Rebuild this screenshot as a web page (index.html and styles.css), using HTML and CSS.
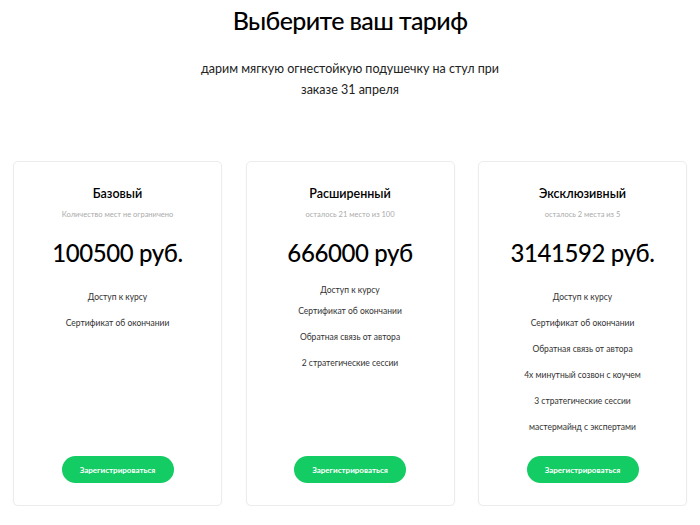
FILE: index.html
```html
<!DOCTYPE html>
<html lang="ru">
<head>
<meta charset="utf-8">
<title>Тарифы</title>
<link rel="stylesheet" href="styles.css">
</head>
<body>
<main class="page">
  <h1 class="title">Выберите ваш тариф</h1>
  <p class="lead">дарим мягкую огнестойкую подушечку на стул при<br>заказе 31 апреля</p>
  <section class="plans">
    <article class="card">
      <h2 class="card-name">Базовый</h2>
      <p class="card-note">Количество мест не ограничено</p>
      <p class="card-price">100500 руб.</p>
      <ul class="features">
        <li>Доступ к курсу</li>
        <li>Сертификат об окончании</li>
      </ul>
      <a class="btn" href="#">Зарегистрироваться</a>
    </article>
    <article class="card">
      <h2 class="card-name">Расширенный</h2>
      <p class="card-note">осталось 21 место из 100</p>
      <p class="card-price">666000 руб</p>
      <ul class="features features-mid">
        <li>Доступ к курсу</li>
        <li>Сертификат об окончании</li>
        <li>Обратная связь от автора</li>
        <li>2 стратегические сессии</li>
      </ul>
      <a class="btn" href="#">Зарегистрироваться</a>
    </article>
    <article class="card">
      <h2 class="card-name">Эксклюзивный</h2>
      <p class="card-note">осталось 2 места из 5</p>
      <p class="card-price">3141592 руб.</p>
      <ul class="features">
        <li>Доступ к курсу</li>
        <li>Сертификат об окончании</li>
        <li>Обратная связь от автора</li>
        <li>4х минутный созвон с коучем</li>
        <li>3 стратегические сессии</li>
        <li>мастермайнд с экспертами</li>
      </ul>
      <a class="btn" href="#">Зарегистрироваться</a>
    </article>
  </section>
</main>
</body>
</html>
```
FILE: styles.css
```css
* { box-sizing: border-box; }
html, body { margin: 0; padding: 0; background: #fff; }
body {
  font-family: "Lato", "Noto Sans", "DejaVu Sans", sans-serif;
  color: #000;
}
.page {
  width: 674px;
  margin: 0 auto;
  display: flex;
  flex-direction: column;
  align-items: center;
}
.title {
  margin: 3px 0 0;
  font-size: 25px;
  line-height: 34px;
  font-weight: 500;
  letter-spacing: -0.6px;
}
.lead {
  margin: 21px 0 0;
  font-size: 12.5px;
  line-height: 21px;
  text-align: center;
  color: #222;
  font-weight: 400;
}
.plans {
  margin-top: 61px;
  width: 100%;
  display: grid;
  grid-template-columns: repeat(3, 209px);
  justify-content: space-between;
}
.card {
  height: 345px;
  border: 1px solid #ececec;
  border-radius: 5px;
  box-shadow: 0 1px 2px rgba(0,0,0,0.04);
  display: flex;
  flex-direction: column;
  align-items: center;
  padding: 23px 10px 22px;
  text-align: center;
}
.card-name {
  margin: 0;
  font-size: 12.5px;
  line-height: 18px;
  font-weight: 600;
}
.card-note {
  margin: 6px 0 0;
  font-size: 7.5px;
  line-height: 12px;
  color: #aaa;
}
.card-price {
  margin: 14px 0 0;
  font-size: 24px;
  line-height: 36px;
  font-weight: 500;
  letter-spacing: -0.4px;
}
.features {
  list-style: none;
  margin: 20px 0 0;
  padding: 0;
  display: flex;
  flex-direction: column;
  gap: 14px;
}
.features li {
  font-size: 8.5px;
  line-height: 12px;
  color: #333;
}
.features-mid { margin-top: 13px; gap: 9px; }
.features-mid li + li + li { margin-top: 5px; }
.btn {
  margin-top: auto;
  width: 112px;
  height: 27px;
  border-radius: 14px;
  background: #14cc64;
  color: #fff;
  font-size: 8px;
  font-weight: 700;
  text-decoration: none;
  display: flex;
  align-items: center;
  justify-content: center;
}
```
